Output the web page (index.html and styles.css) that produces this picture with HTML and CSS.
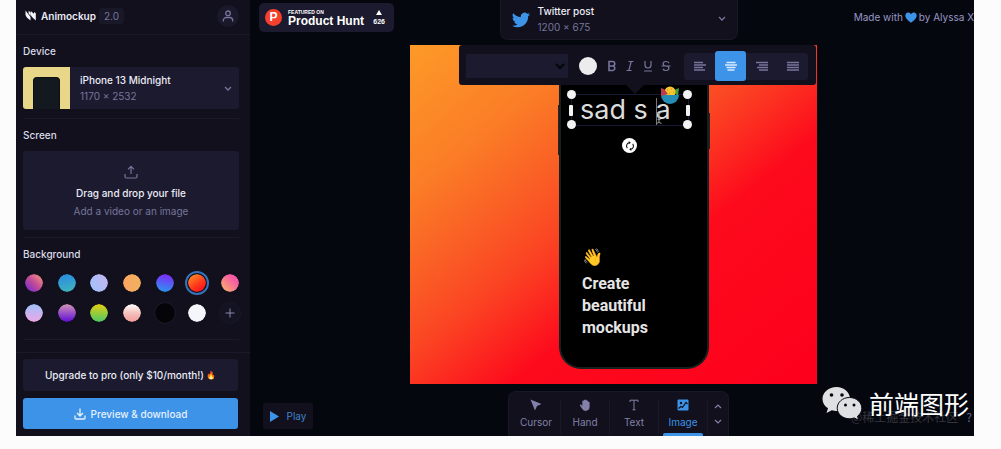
FILE: index.html
```html
<!DOCTYPE html>
<html lang="en">
<head>
<meta charset="utf-8">
<meta name="viewport" content="width=device-width, initial-scale=1">
<title>Animockup 2.0</title>
<link rel="stylesheet" href="styles.css">
</head>
<body>
<div class="app">
  <aside class="sidebar">
    <header class="brand">
      <svg class="brand-logo" viewBox="0 0 12 11" aria-hidden="true"><path d="M.5.500 5.500 7v3.500L1.800 7.500.5 5ZM5.800 1l5 4.500v5L7 7 5.800 5ZM3.600.8l2 1.700v3.500l-2-2.500ZM9 2l1.800 1.200v3L9 5Z" fill="#f4f4fb"/></svg>
      <span class="brand-name">Animockup</span>
      <span class="version">2.0</span>
      <button class="account" type="button" aria-label="Account">
        <svg viewBox="0 0 12 12" class="icon12"><circle cx="6" cy="3.300" r="2.300"/><path d="M1.300 11.500v-1a3 3 0 0 1 3-3h3.400a3 3 0 0 1 3 3v1"/></svg>
      </button>
    </header>

    <div class="panels">
      <section class="panel">
        <h2>Device</h2>
        <button class="device" type="button">
          <span class="thumb"><span class="thumb-phone"></span></span>
          <span class="stack"><span class="strong">iPhone 13 Midnight</span><span class="muted">1170 × 2532</span></span>
          <svg class="chevron" viewBox="0 0 8 5"><path d="m1 1 3 3 3-3"/></svg>
        </button>
      </section>
      <section class="panel">
        <h2>Screen</h2>
        <button class="drop" type="button">
          <svg class="upload" viewBox="0 0 14 14"><path d="M7 9V1.500M4 4.300l3-3 3 3M1 9v2.500A1.500 1.500 0 0 0 2.500 13h9a1.500 1.500 0 0 0 1.500-1.500V9"/></svg>
          <span class="strong">Drag and drop your file</span>
          <span class="muted">Add a video or an image</span>
        </button>
      </section>
      <section class="panel">
        <h2>Background</h2>
        <div class="swatches">
          <button type="button" class="swatch s1" aria-label="Plum to coral"></button>
          <button type="button" class="swatch s2" aria-label="Ocean"></button>
          <button type="button" class="swatch s3" aria-label="Periwinkle"></button>
          <button type="button" class="swatch s4" aria-label="Apricot"></button>
          <button type="button" class="swatch s5" aria-label="Violet to blue"></button>
          <button type="button" class="swatch s6 selected" aria-label="Orange to red" aria-pressed="true"></button>
          <button type="button" class="swatch s7" aria-label="Pink to orange"></button>
          <button type="button" class="swatch s8" aria-label="Blue to pink"></button>
          <button type="button" class="swatch s9" aria-label="Mauve to purple"></button>
          <button type="button" class="swatch s10" aria-label="Yellow to green"></button>
          <button type="button" class="swatch s11" aria-label="Blush"></button>
          <button type="button" class="swatch s12" aria-label="Black"></button>
          <button type="button" class="swatch s13" aria-label="White"></button>
          <button type="button" class="swatch add" aria-label="Add background"><svg viewBox="0 0 10 10"><path d="M5 .5v9M.5 5h9"/></svg></button>
        </div>
      </section>
    </div>

    <footer class="actions">
      <button class="btn upgrade" type="button">Upgrade to pro (only $10/month!) <span class="flame">🔥</span></button>
      <button class="btn download" type="button">
        <svg viewBox="0 0 12 12" class="icon12"><path d="M6 .5V7.500M3 5l3 3 3-3M1 7.500V10a1 1 0 0 0 1 1h8a1 1 0 0 0 1-1V7.500"/></svg>
        Preview &amp; download
      </button>
    </footer>
  </aside>

  <main class="workspace">
    <header class="topbar">
      <a class="hunt" href="#product-hunt">
        <span class="hunt-mark">P</span>
        <span class="hunt-text"><span class="hunt-over">FEATURED ON</span><span class="hunt-name">Product Hunt</span></span>
        <span class="votes"><svg viewBox="0 0 6 5"><path d="M3 0 6 5H0Z" fill="#fff"/></svg>626</span>
      </a>
      <button class="preset" type="button">
        <svg class="bird" viewBox="0 0 24 24"><path fill="#3d93e8" d="M23.950 4.570a10 10 0 0 1-2.820.780 4.960 4.960 0 0 0 2.160-2.720c-.95.550-2 .960-3.130 1.180a4.920 4.920 0 0 0-8.380 4.480A13.900 13.900 0 0 1 1.640 3.160a4.920 4.920 0 0 0 1.520 6.570 4.900 4.900 0 0 1-2.230-.61v.06a4.920 4.920 0 0 0 3.950 4.830 5 5 0 0 1-2.210.08 4.940 4.940 0 0 0 4.600 3.420A9.870 9.870 0 0 1 0 19.540a14 14 0 0 0 7.550 2.210c9.050 0 14-7.500 14-13.980 0-.21 0-.42-.02-.63a9.940 9.940 0 0 0 2.460-2.550Z"/></svg>
        <span class="stack"><span class="strong">Twitter post</span><span class="muted">1200 × 675</span></span>
        <svg class="chevron" viewBox="0 0 8 5"><path d="m1 1 3 3 3-3"/></svg>
      </button>
      <a class="credit" href="#credit">Made with <svg viewBox="0 0 12 11"><path fill="#3d93e8" d="M6 10.800C3.500 8.800.3 6.500.3 3.500A3 3 0 0 1 6 2.200a3 3 0 0 1 5.700 1.300c0 3-3.200 5.300-5.700 7.300Z"/></svg> by Alyssa X</a>
    </header>

    <div class="stage">
      <div class="canvas">
        <div class="phone">
          <div class="phone-copy">
            <span class="wave">👋</span>
            <p>Create<br>beautiful<br>mockups</p>
          </div>
        </div>

        <div class="text-layer">
          <input class="layer-input" type="text" value="sad s a" aria-label="Text layer">
          <span class="caret"></span>
          <svg class="ibeam" viewBox="0 0 6 12"><path d="M.5.700Q3 .7 3 2.500v7Q3 11.300.5 11.300M5.500.700Q3 .7 3 2.500M3 9.500q0 1.800 2.500 1.800M1.500 7.500h3" fill="none" stroke="#999" /></svg>
          <svg class="ball" viewBox="0 0 20 20"><path d="m12 5 7-3-1 8Z" fill="#44a13e"/><circle cx="10" cy="6" r="5.500" fill="#f9c52d"/><path d="M1 9h18a9 9 0 0 1-18 0Z" fill="#258db5"/><path d="m1 2 3 1 4 5-7 2Z" fill="#b83c4b"/><path d="M7 4h1m3-1h1m1 3h1M9 7h1" stroke="#e67d26"/></svg>
          <i class="knob nw"></i><i class="knob ne"></i><i class="knob sw"></i><i class="knob se"></i>
          <i class="grip west"></i><i class="grip east"></i>
          <button class="rotate" type="button" aria-label="Rotate"><svg viewBox="0 0 12 12"><path d="M5 2A4 4 0 0 0 2.800 8.500M7 10A4 4 0 0 0 9.200 3.500" fill="none" stroke="#111" stroke-width="1.300"/><path d="M4.500 0v4L7 2ZM7.500 8v4L5 10Z" fill="#111"/></svg></button>
        </div>

        <div class="format-bar">
          <select class="font-select" aria-label="Font"><option></option></select>
          <button class="color" type="button" aria-label="Text colour"></button>
          <div class="styles">
            <button type="button" aria-label="Bold"><svg viewBox="0 0 10 12"><path d="M2 1.500h3.500a2.200 2.200 0 0 1 0 4.500H2Zm0 4.500h4a2.300 2.300 0 0 1 0 4.500H2Z" stroke-width="1.600"/></svg></button>
            <button type="button" aria-label="Italic"><svg viewBox="0 0 10 12"><path d="M3.500 1.500h5M1.500 10.500h5M6.200 1.500l-2.400 9"/></svg></button>
            <button type="button" aria-label="Underline"><svg viewBox="0 0 10 12"><path d="M2 1v4a3 3 0 0 0 6 0V1M1 11h8"/></svg></button>
            <button type="button" aria-label="Strikethrough"><svg viewBox="0 0 10 12"><path d="M8 3.200C7.500 2 6.500 1.500 5 1.500c-3.800 0-3.800 4.200 0 4.500 3.800.300 3.800 4.500 0 4.500-1.500 0-2.600-.5-3-1.800M.5 6h9"/></svg></button>
          </div>
          <div class="aligns">
            <button type="button" aria-label="Align left"><svg viewBox="0 0 12 10"><path d="M0 1.500h9M0 4h12M0 6.500h9M0 9h11"/></svg></button>
            <button type="button" class="on" aria-label="Align centre" aria-pressed="true"><svg viewBox="0 0 12 10"><path d="M1.500 1.500h9M0 4h12M1.500 6.500h9M2.500 9h7"/></svg></button>
            <button type="button" aria-label="Align right"><svg viewBox="0 0 12 10"><path d="M0 1.500h12M3 4h9M1 6.500h11M3 9h9"/></svg></button>
            <button type="button" aria-label="Justify"><svg viewBox="0 0 12 10"><path d="M0 1.500h12M0 4h12M0 6.500h12M0 9h12"/></svg></button>
          </div>
        </div>
      </div>
    </div>

    <footer class="bottombar">
      <button class="play" type="button"><svg viewBox="0 0 9 11"><path d="M0 0v11l9-5.500Z" fill="#3d93e8"/></svg>Play</button>
      <nav class="tools" aria-label="Tools">
        <button class="tool" type="button"><svg viewBox="0 0 12 12"><path fill="currentColor" d="M.5.500 11.500 5 7 7 5 11.500Z"/></svg>Cursor</button>
        <button class="tool" type="button"><svg viewBox="0 0 12 12"><path fill="currentColor" d="M3.300 7V2.300a.7.7 0 0 1 1.400 0V1.300a.8.800 0 0 1 1.500 0V.9a.8.800 0 0 1 1.500 0v1a.8.800 0 0 1 1.500 0v1.600a.7.7 0 0 1 1.400 0V8a4 4 0 0 1-7.600 1.600L.9 6.500c-.4-1 .7-1.300 1.300-.7Z"/></svg>Hand</button>
        <button class="tool" type="button"><svg viewBox="0 0 12 12"><path d="M2 3V1.200h8V3M6 1.200v9.600M4.500 10.800h3" fill="none" stroke="currentColor"/></svg>Text</button>
        <button class="tool active" type="button"><svg viewBox="0 0 12 12"><rect x=".5" y=".5" width="11" height="11" rx="1" fill="currentColor"/><circle cx="4" cy="4" r="1.200" fill="#11101c"/><path d="m1.500 9.500 2.500-2 1.500 1 3.500-5L10.500 5" fill="none" stroke="#11101c" stroke-width="1.200"/></svg>Image</button>
        <span class="steps">
          <button type="button" aria-label="Bring forward"><svg viewBox="0 0 8 5"><path d="m1 4 3-3 3 3"/></svg></button>
          <button type="button" aria-label="Send backward"><svg viewBox="0 0 8 5"><path d="m1 1 3 3 3-3"/></svg></button>
        </span>
      </nav>
    </footer>
  </main>

  <div class="source-mark"><span>@稀土掘金技术社区</span><a class="help" href="#help">?</a></div>
  <div class="channel">
    <svg viewBox="0 0 40 35" aria-hidden="true"><path fill="#dfe0e2" d="M14.500 1C6.800 1 .5 6.200.5 13c0 3.900 2 7 5.500 9.300L4.500 27l5.300-2.800c1.900.5 3.200.8 4.700.8 7.500 0 13.500-5.300 13.500-12S22 1 14.500 1Z"/><path fill="#dfe0e2" stroke="#05070f" d="M27.500 11.500c6.800 0 12.300 4.800 12.300 10.800 0 3.200-1.700 6-4.300 8l1.200 4-4.500-2.400c-1.500.6-3 .9-4.700.9-6.900 0-12.300-4.900-12.300-10.700s5.400-10.600 12.300-10.600Z"/><g fill="#05070f"><circle cx="9.500" cy="9" r="1.800"/><circle cx="20" cy="9" r="1.800"/><circle cx="23.500" cy="19" r="1.500"/><circle cx="32" cy="19" r="1.500"/></g></svg>
    <span>前端图形</span>
  </div>
</div>
</body>
</html>
```
FILE: styles.css
```css
* { box-sizing: border-box; }

body {
  margin: 0;
  padding: 0 27px 13px 16px;
  background: #fcfcfc;
  font: 400 10px/14px Inter, "Liberation Sans", sans-serif;
  color: #ececf6;
}

button, input, select { margin: 0; border: 0; padding: 0; font: inherit; color: inherit; background: none; }
button { cursor: pointer; }
a { color: inherit; text-decoration: none; }
svg { display: block; flex: none; }
h2, p { margin: 0; }

.app {
  position: relative;
  display: flex;
  min-height: calc(100vh - 13px);
  background: #05070f;
  overflow: hidden;
}

.strong { font-weight: 500; color: #ececf6; }
.muted { color: #77759d; }
.stack { display: flex; flex-direction: column; gap: 2px; text-align: left; }
.chevron { width: 8px; height: 5px; margin-left: auto; fill: none; stroke: #77759d; stroke-width: 1.3; }
.icon12 { width: 12px; height: 12px; fill: none; stroke: currentColor; stroke-width: 1.3; }

/* Sidebar */
.sidebar {
  display: flex;
  flex: none;
  flex-direction: column;
  width: 234px;
  background: #11101c;
}

.brand {
  display: flex;
  align-items: center;
  height: 35px;
  padding: 0 11px 3px 9px;
  border-bottom: 1px solid #191826;
}
.brand-logo { width: 12px; height: 11px; }
.brand-name { margin-left: 4px; font-weight: 600; }
.version { margin-left: 3px; padding: 1px 5px; border-radius: 3px; background: #191829; color: #77759d; }
.account {
  display: grid;
  place-items: center;
  width: 22px;
  height: 22px;
  margin-left: auto;
  border-radius: 50%;
  background: #1a192b;
  color: #77759d;
}

.panels { display: flex; flex: 1; flex-direction: column; padding: 0 11px 0 7px; }
.panel { padding: 9px 0; border-bottom: 1px solid #1b1a2a; }
.panel h2 { margin-bottom: 9px; font-size: 10px; font-weight: 500; line-height: 14px; color: #dcdcea; }
.panel:nth-child(2) { padding-bottom: 7px; }

.device {
  display: flex;
  align-items: center;
  width: 100%;
  height: 42px;
  padding-right: 7px;
  border-radius: 3px;
  background: #1b1a2e;
  overflow: hidden;
}
.thumb { display: flex; align-items: flex-end; justify-content: center; width: 47px; height: 42px; margin-right: 10px; background: #e8d789; }
.thumb-phone { width: 27px; height: 32px; border: 1px solid #0c0f14; border-bottom: 0; border-radius: 4px 4px 0 0; background: #14191f; }

.drop {
  display: flex;
  flex-direction: column;
  align-items: center;
  gap: 4px;
  width: 100%;
  padding: 14px 0 12px;
  border-radius: 3px;
  background: #1b1a2e;
}
.upload { width: 14px; height: 14px; margin-bottom: 3px; fill: none; stroke: #77759d; stroke-width: 1.2; }

.swatches { display: grid; grid-template-columns: repeat(7, 22px); justify-content: space-between; row-gap: 8px; margin: 0 -2px 6px 0; padding-top: 2px; }
.swatch { display: grid; place-items: center; width: 22px; height: 22px; border: 2px solid #11101c; border-radius: 50%; background-clip: padding-box; }
.swatch.selected { outline: 2px solid #3672b8; outline-offset: -1px; }
.s1 { background-image: linear-gradient(45deg, #6a25d8, #c14b99 50%, #ff9e7a); }
.s2 { background-image: linear-gradient(165deg, #2687e6, #43b8b8); }
.s3 { background-image: linear-gradient(60deg, #9cc3fb, #c6b4f1); }
.s4 { background-image: linear-gradient(90deg, #faa564, #efb25d); }
.s5 { background-image: linear-gradient(190deg, #8420f7, #279df0); }
.s6 { background-image: linear-gradient(145deg, #ff9d29, #ff3a1c 55%, #fb001d); }
.s7 { background-image: linear-gradient(45deg, #f6bc63, #f75ba4 70%); }
.s8 { background-image: linear-gradient(#9fc0fb, #eda7e5); }
.s9 { background-image: linear-gradient(#d296b9, #5f0bd4); }
.s10 { background-image: linear-gradient(#e6ce12, #4aca64); }
.s11 { background-image: linear-gradient(#fff, #f3c2bd 50%, #f39b98); }
.s12 { background-color: #050509; border: 1px solid #1a1926; }
.s13 { background-color: #f4f6fb; }
.add { border: 1px solid #191829; background: #131321; }
.add svg { width: 10px; height: 10px; stroke: #8b89ad; }

.actions { display: flex; flex-direction: column; gap: 7px; padding: 6px 12px 7px 7px; border-top: 1px solid #1a1927; }
.btn { display: flex; align-items: center; justify-content: center; gap: 5px; height: 32px; border-radius: 3px; font-weight: 500; }
.upgrade { gap: 2px; background: #1b1a2e; }
.flame { font-size: 8px; }
.download { height: 31px; background: #3d93e8; color: #e6f1ff; }

/* Workspace */
.workspace { display: flex; flex: 1; flex-direction: column; min-width: 0; }

.topbar { display: grid; grid-template-columns: 1fr 238px 1fr; align-items: start; padding-left: 13px; }
.hunt {
  display: flex;
  align-items: center;
  justify-self: start;
  width: 135px;
  height: 29px;
  margin: 3px 0 0 -4px;
  padding: 0 9px 0 6px;
  border-radius: 5px;
  background: #1b1a2e;
  font-family: "Liberation Sans", Arial, sans-serif;
  font-weight: 700;
  color: #fff;
}
.hunt-mark { width: 17px; height: 17px; margin-right: 6px; border-radius: 50%; background: #f4402c; font-size: 12px; line-height: 17px; text-align: center; }
.hunt-text { display: flex; flex-direction: column; }
.hunt-over { font-size: 5px; line-height: 6px; }
.hunt-name { font-size: 12px; line-height: 12px; white-space: nowrap; }
.votes { display: flex; flex-direction: column; align-items: center; gap: 3px; margin-left: auto; font-size: 7px; line-height: 8px; }
.votes svg { width: 6px; height: 5px; }

.preset {
  display: flex;
  align-items: center;
  height: 40px;
  padding: 0 11px 2px 11px;
  border: 1px solid #191826;
  border-top: 0;
  border-radius: 0 0 8px 8px;
  background: #11101c;
}
.bird { width: 18px; height: 18px; margin: 2px 8px 0 0; }
.credit { display: flex; align-items: center; justify-self: end; gap: 2px; margin-top: 10px; color: #9997c4; white-space: nowrap; }
.credit svg { width: 12px; height: 11px; }

.stage { display: flex; flex: 1; justify-content: center; padding: 5px 0 7px 3px; }
.canvas {
  position: relative;
  width: 100%;
  max-width: 407px;
  background: linear-gradient(141deg, #fd9a28 0%, #fb7d26 22%, #fa6025 35%, #fb4523 46%, #fc2a20 54%, #fd0a1c 63%, #fd001c 100%);
}

.phone {
  position: absolute;
  top: 2px;
  right: 108px;
  bottom: 15px;
  width: 150px;
  border: 2px solid #15201f;
  border-top: 0;
  border-radius: 0 0 22px 22px;
  background: #000;
}
.phone::before, .phone::after { content: ""; position: absolute; width: 1px; background: #30201f; }
.phone::before { top: 58px; left: -3px; height: 50px; }
.phone::after { top: 66px; right: -3px; height: 36px; }
.phone-copy { position: absolute; bottom: 28px; left: 21px; font: 700 16px/22px Roboto, sans-serif; color: #e5e5e5; }
.wave { display: block; margin-bottom: 5px; font-size: 17px; }

.text-layer { position: absolute; top: 49px; left: 161px; width: 118px; height: 32px; border: 1px solid #181a35; }
.layer-input { display: block; width: 100%; height: 30px; padding: 0 8px; outline: 0; font-size: 27px; line-height: 30px; color: #dcdcdc; }
.caret { position: absolute; top: 3px; left: 84px; width: 1px; height: 27px; background: #777; }
.ibeam { position: absolute; top: 17px; left: 84px; width: 6px; height: 12px; }
.ball { position: absolute; top: -9px; left: 88px; width: 20px; height: 20px; }
.knob, .grip { position: absolute; background: #f3f3f3; }
.knob { width: 9px; height: 9px; border-radius: 50%; }
.nw { top: -5px; left: -5px; }
.ne { top: -5px; right: -4px; }
.sw { bottom: -4px; left: -5px; }
.se { bottom: -4px; right: -4px; }
.grip { top: 10px; width: 4px; height: 11px; border-radius: 1px; }
.west { left: -3px; }
.east { right: -2px; }
.rotate { position: absolute; top: 43px; left: 50px; display: grid; place-items: center; width: 15px; height: 15px; border-radius: 50%; background: #fff; }
.rotate svg { width: 10px; height: 10px; }

.format-bar {
  position: absolute;
  top: 0;
  right: 1px;
  display: flex;
  align-items: center;
  width: 357px;
  height: 40px;
  padding: 2px 8px 0 7px;
  border-radius: 3px;
  background: #11101c;
}
.format-bar::after { content: ""; position: absolute; top: 100%; left: 167px; border: 9px solid transparent; border-top-color: #11101c; border-bottom: 0; }
.font-select { width: 102px; height: 24px; margin-right: 11px; background: #1b1a2e; color: #05050c; }
.color { width: 18px; height: 18px; margin-right: 10px; border-radius: 50%; background: #ececec; }
.styles { display: flex; gap: 8px; }
.styles svg { width: 10px; height: 12px; fill: none; stroke: #77759d; stroke-width: 1.2; }
.aligns { display: flex; align-items: center; height: 27px; margin-left: auto; border-radius: 3px; background: #1b1a2e; }
.aligns button { display: grid; place-items: center; width: 31px; height: 30px; border-radius: 3px; }
.aligns svg { width: 12px; height: 10px; stroke: #77759d; stroke-width: 1.4; }
.aligns .on { background: #3d93e8; }
.aligns .on svg { stroke: #d9eaff; }

.bottombar { display: grid; grid-template-columns: 1fr auto 1fr; align-items: start; padding-left: 13px; }
.play { display: flex; align-items: center; justify-content: center; justify-self: start; gap: 8px; width: 50px; height: 26px; margin-top: 12px; border-radius: 3px; background: #11101c; color: #3d83cc; }
.play svg { width: 9px; height: 11px; }
.tools { display: flex; width: 221px; height: 45px; padding: 0 0 0 3px; border: 1px solid #191826; border-bottom: 0; border-radius: 8px 8px 0 0; background: #11101c; }
.tool { display: flex; flex: 1; flex-direction: column; align-items: center; gap: 4px; margin: 7px 0 0; border-right: 1px solid #191826; border-bottom: 3px solid transparent; color: #8381aa; }
.tool svg { width: 12px; height: 12px; }
.tool.active { position: relative; color: #3d93e8; }
.tool.active::after { content: ""; position: absolute; right: 4px; bottom: -3px; left: 4px; height: 3px; border-radius: 2px 2px 0 0; background: #3d93e8; }
.steps { display: flex; flex-direction: column; justify-content: center; gap: 10px; padding: 0 6px; }
.steps svg { width: 8px; height: 5px; fill: none; stroke: #8381aa; stroke-width: 1.2; }

/* Overlaid marks */
.channel {
  position: absolute;
  right: 5px;
  bottom: 15px;
  display: flex;
  align-items: center;
  gap: 7px;
  font: 400 25px/36px "Noto Sans CJK SC", sans-serif;
  color: #fff;
}
.channel svg { width: 40px; height: 35px; }
.source-mark { position: absolute; right: 2px; bottom: 10px; display: flex; align-items: center; gap: 8px; font: 400 12px/18px "Noto Sans CJK SC", sans-serif; color: #34363c; }
.help { color: #62638f; }
```
